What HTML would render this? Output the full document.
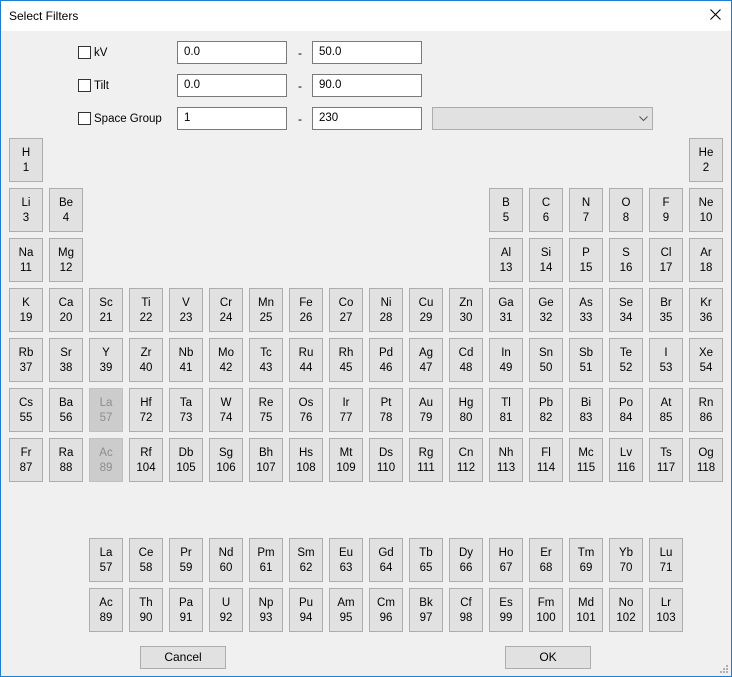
<!DOCTYPE html>
<html><head><meta charset="utf-8"><style>
*{box-sizing:border-box;margin:0;padding:0}
html,body{width:732px;height:677px;overflow:hidden;background:#f0f0f0;font-family:"Liberation Sans",sans-serif;font-size:12px;color:#000}
#win{position:absolute;left:0;top:0;width:732px;height:677px;background:#f0f0f0}
#bd{position:absolute;left:0;top:0;width:732px;height:677px;border:1px solid #1a7fd4;pointer-events:none}
#title{position:absolute;left:0;top:0;width:732px;height:31px;background:#fff}
#title span{position:absolute;left:9px;top:9px;font-size:12px}
#x{position:absolute;left:710px;top:9px;width:11px;height:11px}
.cb{position:absolute;left:78px;width:13px;height:13px;border:1px solid #333;background:#fff}
.lb{position:absolute;left:94px;font-size:11.5px;line-height:14px}
.in{position:absolute;height:23px;border:1px solid #7a7a7a;background:#fff;padding:0 6px;line-height:21px;width:110px;font-size:11.5px}
.dash{position:absolute;left:298px;line-height:14px}
#combo{position:absolute;left:432px;top:107px;width:221px;height:23px;border:1px solid #adadad;background:#e1e1e1}
.e{position:absolute;width:34px;height:44px;border:1px solid #adadad;background:#e1e1e1;text-align:center;line-height:15px;padding-top:7px;font-size:11.5px}
.d{background:#cccccc;border-color:#bfbfbf;color:#8d8d8d}
.btn{position:absolute;top:646px;width:86px;height:23px;border:1px solid #adadad;background:#e1e1e1;text-align:center;line-height:21px}
</style></head><body><div id="win">
<div id="title"><span>Select Filters</span>
<svg id="x" viewBox="0 0 11 11"><path d="M0.5 0.5L10.5 10.5M10.5 0.5L0.5 10.5" stroke="#000" stroke-width="1.1"/></svg></div>
<div class="cb" style="top:46px"></div><div class="lb" style="top:46px">kV</div>
<div class="in" style="left:177px;top:41px">0.0</div><div class="dash" style="top:46px">-</div><div class="in" style="left:312px;top:41px">50.0</div>
<div class="cb" style="top:79px"></div><div class="lb" style="top:79px">Tilt</div>
<div class="in" style="left:177px;top:74px">0.0</div><div class="dash" style="top:79px">-</div><div class="in" style="left:312px;top:74px">90.0</div>
<div class="cb" style="top:112px"></div><div class="lb" style="top:112px">Space Group</div>
<div class="in" style="left:177px;top:107px">1</div><div class="dash" style="top:112px">-</div><div class="in" style="left:312px;top:107px">230</div>
<div id="combo"><svg style="position:absolute;left:206px;top:8px" width="9" height="6" viewBox="0 0 9 6"><path d="M0.5 0.5L4.5 4.5L8.5 0.5" stroke="#555" fill="none"/></svg></div>

<div class="e" style="left:9px;top:138px">H<br>1</div>
<div class="e" style="left:689px;top:138px">He<br>2</div>

<div class="e" style="left:9px;top:188px">Li<br>3</div>
<div class="e" style="left:49px;top:188px">Be<br>4</div>
<div class="e" style="left:489px;top:188px">B<br>5</div>
<div class="e" style="left:529px;top:188px">C<br>6</div>
<div class="e" style="left:569px;top:188px">N<br>7</div>
<div class="e" style="left:609px;top:188px">O<br>8</div>
<div class="e" style="left:649px;top:188px">F<br>9</div>
<div class="e" style="left:689px;top:188px">Ne<br>10</div>

<div class="e" style="left:9px;top:238px">Na<br>11</div>
<div class="e" style="left:49px;top:238px">Mg<br>12</div>
<div class="e" style="left:489px;top:238px">Al<br>13</div>
<div class="e" style="left:529px;top:238px">Si<br>14</div>
<div class="e" style="left:569px;top:238px">P<br>15</div>
<div class="e" style="left:609px;top:238px">S<br>16</div>
<div class="e" style="left:649px;top:238px">Cl<br>17</div>
<div class="e" style="left:689px;top:238px">Ar<br>18</div>

<div class="e" style="left:9px;top:288px">K<br>19</div>
<div class="e" style="left:49px;top:288px">Ca<br>20</div>
<div class="e" style="left:89px;top:288px">Sc<br>21</div>
<div class="e" style="left:129px;top:288px">Ti<br>22</div>
<div class="e" style="left:169px;top:288px">V<br>23</div>
<div class="e" style="left:209px;top:288px">Cr<br>24</div>
<div class="e" style="left:249px;top:288px">Mn<br>25</div>
<div class="e" style="left:289px;top:288px">Fe<br>26</div>
<div class="e" style="left:329px;top:288px">Co<br>27</div>
<div class="e" style="left:369px;top:288px">Ni<br>28</div>
<div class="e" style="left:409px;top:288px">Cu<br>29</div>
<div class="e" style="left:449px;top:288px">Zn<br>30</div>
<div class="e" style="left:489px;top:288px">Ga<br>31</div>
<div class="e" style="left:529px;top:288px">Ge<br>32</div>
<div class="e" style="left:569px;top:288px">As<br>33</div>
<div class="e" style="left:609px;top:288px">Se<br>34</div>
<div class="e" style="left:649px;top:288px">Br<br>35</div>
<div class="e" style="left:689px;top:288px">Kr<br>36</div>

<div class="e" style="left:9px;top:338px">Rb<br>37</div>
<div class="e" style="left:49px;top:338px">Sr<br>38</div>
<div class="e" style="left:89px;top:338px">Y<br>39</div>
<div class="e" style="left:129px;top:338px">Zr<br>40</div>
<div class="e" style="left:169px;top:338px">Nb<br>41</div>
<div class="e" style="left:209px;top:338px">Mo<br>42</div>
<div class="e" style="left:249px;top:338px">Tc<br>43</div>
<div class="e" style="left:289px;top:338px">Ru<br>44</div>
<div class="e" style="left:329px;top:338px">Rh<br>45</div>
<div class="e" style="left:369px;top:338px">Pd<br>46</div>
<div class="e" style="left:409px;top:338px">Ag<br>47</div>
<div class="e" style="left:449px;top:338px">Cd<br>48</div>
<div class="e" style="left:489px;top:338px">In<br>49</div>
<div class="e" style="left:529px;top:338px">Sn<br>50</div>
<div class="e" style="left:569px;top:338px">Sb<br>51</div>
<div class="e" style="left:609px;top:338px">Te<br>52</div>
<div class="e" style="left:649px;top:338px">I<br>53</div>
<div class="e" style="left:689px;top:338px">Xe<br>54</div>

<div class="e" style="left:9px;top:388px">Cs<br>55</div>
<div class="e" style="left:49px;top:388px">Ba<br>56</div>
<div class="e d" style="left:89px;top:388px">La<br>57</div>
<div class="e" style="left:129px;top:388px">Hf<br>72</div>
<div class="e" style="left:169px;top:388px">Ta<br>73</div>
<div class="e" style="left:209px;top:388px">W<br>74</div>
<div class="e" style="left:249px;top:388px">Re<br>75</div>
<div class="e" style="left:289px;top:388px">Os<br>76</div>
<div class="e" style="left:329px;top:388px">Ir<br>77</div>
<div class="e" style="left:369px;top:388px">Pt<br>78</div>
<div class="e" style="left:409px;top:388px">Au<br>79</div>
<div class="e" style="left:449px;top:388px">Hg<br>80</div>
<div class="e" style="left:489px;top:388px">Tl<br>81</div>
<div class="e" style="left:529px;top:388px">Pb<br>82</div>
<div class="e" style="left:569px;top:388px">Bi<br>83</div>
<div class="e" style="left:609px;top:388px">Po<br>84</div>
<div class="e" style="left:649px;top:388px">At<br>85</div>
<div class="e" style="left:689px;top:388px">Rn<br>86</div>

<div class="e" style="left:9px;top:438px">Fr<br>87</div>
<div class="e" style="left:49px;top:438px">Ra<br>88</div>
<div class="e d" style="left:89px;top:438px">Ac<br>89</div>
<div class="e" style="left:129px;top:438px">Rf<br>104</div>
<div class="e" style="left:169px;top:438px">Db<br>105</div>
<div class="e" style="left:209px;top:438px">Sg<br>106</div>
<div class="e" style="left:249px;top:438px">Bh<br>107</div>
<div class="e" style="left:289px;top:438px">Hs<br>108</div>
<div class="e" style="left:329px;top:438px">Mt<br>109</div>
<div class="e" style="left:369px;top:438px">Ds<br>110</div>
<div class="e" style="left:409px;top:438px">Rg<br>111</div>
<div class="e" style="left:449px;top:438px">Cn<br>112</div>
<div class="e" style="left:489px;top:438px">Nh<br>113</div>
<div class="e" style="left:529px;top:438px">Fl<br>114</div>
<div class="e" style="left:569px;top:438px">Mc<br>115</div>
<div class="e" style="left:609px;top:438px">Lv<br>116</div>
<div class="e" style="left:649px;top:438px">Ts<br>117</div>
<div class="e" style="left:689px;top:438px">Og<br>118</div>

<div class="e" style="left:89px;top:538px">La<br>57</div>
<div class="e" style="left:129px;top:538px">Ce<br>58</div>
<div class="e" style="left:169px;top:538px">Pr<br>59</div>
<div class="e" style="left:209px;top:538px">Nd<br>60</div>
<div class="e" style="left:249px;top:538px">Pm<br>61</div>
<div class="e" style="left:289px;top:538px">Sm<br>62</div>
<div class="e" style="left:329px;top:538px">Eu<br>63</div>
<div class="e" style="left:369px;top:538px">Gd<br>64</div>
<div class="e" style="left:409px;top:538px">Tb<br>65</div>
<div class="e" style="left:449px;top:538px">Dy<br>66</div>
<div class="e" style="left:489px;top:538px">Ho<br>67</div>
<div class="e" style="left:529px;top:538px">Er<br>68</div>
<div class="e" style="left:569px;top:538px">Tm<br>69</div>
<div class="e" style="left:609px;top:538px">Yb<br>70</div>
<div class="e" style="left:649px;top:538px">Lu<br>71</div>

<div class="e" style="left:89px;top:588px">Ac<br>89</div>
<div class="e" style="left:129px;top:588px">Th<br>90</div>
<div class="e" style="left:169px;top:588px">Pa<br>91</div>
<div class="e" style="left:209px;top:588px">U<br>92</div>
<div class="e" style="left:249px;top:588px">Np<br>93</div>
<div class="e" style="left:289px;top:588px">Pu<br>94</div>
<div class="e" style="left:329px;top:588px">Am<br>95</div>
<div class="e" style="left:369px;top:588px">Cm<br>96</div>
<div class="e" style="left:409px;top:588px">Bk<br>97</div>
<div class="e" style="left:449px;top:588px">Cf<br>98</div>
<div class="e" style="left:489px;top:588px">Es<br>99</div>
<div class="e" style="left:529px;top:588px">Fm<br>100</div>
<div class="e" style="left:569px;top:588px">Md<br>101</div>
<div class="e" style="left:609px;top:588px">No<br>102</div>
<div class="e" style="left:649px;top:588px">Lr<br>103</div>

<div class="btn" style="left:140px">Cancel</div>
<div class="btn" style="left:505px">OK</div>
<svg style="position:absolute;left:719px;top:664px" width="10" height="10" viewBox="0 0 10 10"><g fill="#b0b0b0"><rect x="7" y="1" width="2" height="2"/><rect x="4" y="4" width="2" height="2"/><rect x="7" y="4" width="2" height="2"/><rect x="1" y="7" width="2" height="2"/><rect x="4" y="7" width="2" height="2"/><rect x="7" y="7" width="2" height="2"/></g></svg>
<div id="bd"></div>
</div></body></html>
